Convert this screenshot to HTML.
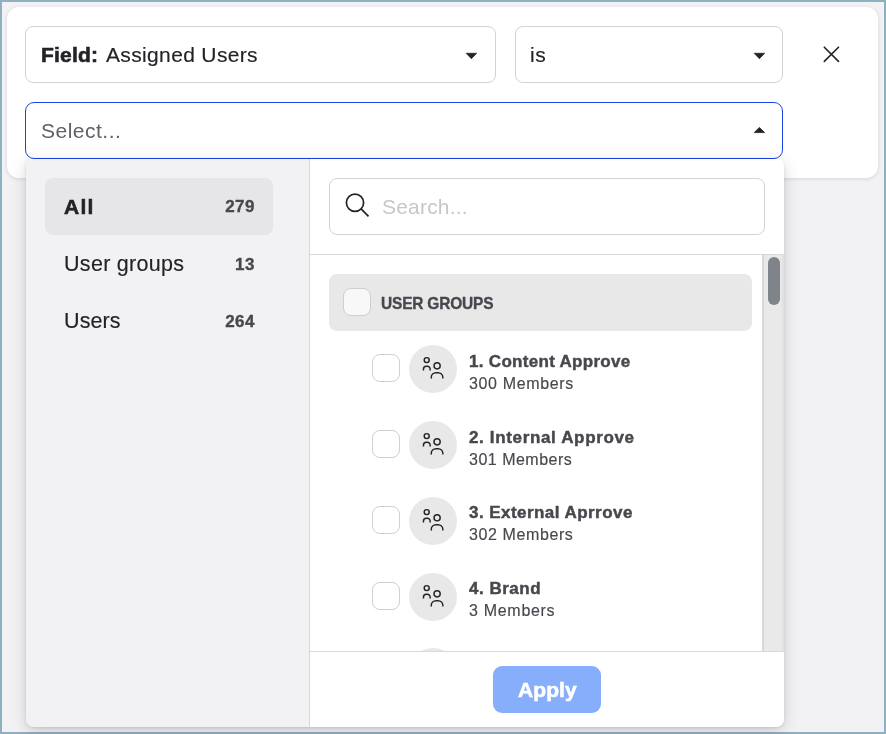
<!DOCTYPE html>
<html><head><meta charset="utf-8">
<style>
*{box-sizing:border-box;margin:0;padding:0}
body{will-change:transform}html,body{width:886px;height:734px;overflow:hidden;background:#8fb0bf;font-family:"Liberation Sans",sans-serif}
.page{position:absolute;left:2px;top:2px;width:882px;height:730px;background:#f2f2f4}
.abs{position:absolute}
.card{left:7px;top:7px;width:871px;height:171px;background:#fff;border-radius:12px;box-shadow:0 1px 4px rgba(0,0,0,.12)}
.box{border:1px solid #d3d3d6;border-radius:8px;background:#fff}
.txt{white-space:nowrap;line-height:1}
.b1{-webkit-text-stroke:.6px currentColor}
.b2{-webkit-text-stroke:.35px currentColor}
.r1{-webkit-text-stroke:.15px currentColor}
.panel{left:26px;top:159px;width:758px;height:568px;background:#fff;border-radius:0 6px 8px 8px;box-shadow:0 4px 16px rgba(0,0,0,.16),0 1px 3px rgba(0,0,0,.1);overflow:hidden}
.left{left:0;top:0;width:284px;height:568px;background:#f2f2f4;border-right:1px solid #d9d9dc}
.cb{width:28px;height:28px;border:1px solid #cfcfd2;border-radius:8px;background:#fff}
.av{width:48px;height:48px;border-radius:50%;background:#e8e8e9}
.ttl{-webkit-text-stroke:.45px currentColor;font-weight:bold;font-size:17px;color:#47484d}
.sub{-webkit-text-stroke:.15px currentColor;font-size:16px;color:#47484d;letter-spacing:.5px}
.num{-webkit-text-stroke:.35px currentColor;font-size:17px;font-weight:bold;color:#47484d;letter-spacing:.5px;width:60px;text-align:right}
</style></head><body>
<div class="page"></div>
<div class="abs card"></div>
<!-- Field box -->
<div class="abs box" style="left:25px;top:26px;width:471px;height:57px"></div>
<div class="abs txt b1" style="left:41px;top:44px;font-size:21px;font-weight:bold;color:#222327;letter-spacing:.2px">Field:</div>
<div class="abs txt r1" style="left:106px;top:44px;font-size:21px;color:#222327;letter-spacing:.35px">Assigned Users</div>
<svg class="abs" style="left:460px;top:48px" width="24" height="16" viewBox="0 0 24 16"><path d="M6.2 5.3 H16.6 L11.4 10.7 Z" fill="#222327" stroke="#222327" stroke-width=".8" stroke-linejoin="round"/></svg>
<!-- is box -->
<div class="abs box" style="left:515px;top:26px;width:268px;height:57px"></div>
<div class="abs txt r1" style="left:530px;top:44px;font-size:21px;color:#222327;letter-spacing:.5px">is</div>
<svg class="abs" style="left:748px;top:48px" width="24" height="16" viewBox="0 0 24 16"><path d="M6.2 5.3 H16.6 L11.4 10.7 Z" fill="#222327" stroke="#222327" stroke-width=".8" stroke-linejoin="round"/></svg>
<!-- X -->
<svg class="abs" style="left:816px;top:40px" width="30" height="28" viewBox="0 0 30 28"><path d="M8.3 7.2 L22.5 21.4 M22.5 7.2 L8.3 21.4" stroke="#222327" stroke-width="1.6" fill="none" stroke-linecap="round"/></svg>
<!-- Select box -->
<div class="abs box" style="left:25px;top:102px;width:758px;height:57px;border-color:#1a44e8;border-radius:9px"></div>
<div class="abs txt" style="left:41px;top:120px;font-size:21px;color:#5f6068;letter-spacing:.5px">Select...</div>
<svg class="abs" style="left:748px;top:122px" width="24" height="16" viewBox="0 0 24 16"><path d="M6.2 10.6 H16.6 L11.4 5.4 Z" fill="#222327" stroke="#222327" stroke-width=".8" stroke-linejoin="round"/></svg>

<!-- Panel -->
<div class="abs panel">
  <div class="abs left"></div>
  <div class="abs" style="left:19px;top:19px;width:228px;height:57px;background:#e6e6e8;border-radius:8px"></div>
  <div class="abs txt b1" style="left:38px;top:37px;font-size:21px;font-weight:bold;color:#222327;letter-spacing:1.3px">All</div>
  <div class="abs txt num" style="left:169px;top:39px">279</div>
  <div class="abs txt r1" style="left:38px;top:94.5px;font-size:21.5px;color:#222327;letter-spacing:.3px">User groups</div>
  <div class="abs txt num" style="left:169px;top:97px">13</div>
  <div class="abs txt r1" style="left:38px;top:151.5px;font-size:21.5px;color:#222327;letter-spacing:.1px">Users</div>
  <div class="abs txt num" style="left:169px;top:154px">264</div>

  <!-- search -->
  <div class="abs box" style="left:303px;top:19px;width:436px;height:57px"></div>
  <svg class="abs" style="left:314px;top:29px" width="30" height="30" viewBox="0 0 30 30"><circle cx="15" cy="14.8" r="8.6" stroke="#222327" stroke-width="1.7" fill="none"/><path d="M21.1 20.9 L28.5 28.3" stroke="#222327" stroke-width="1.7"/></svg>
  <div class="abs txt" style="left:356px;top:37px;font-size:21px;color:#c7c7ca;letter-spacing:.2px">Search...</div>
  <div class="abs" style="left:284px;top:95px;width:474px;height:1px;background:#d9d9dc"></div>

  <!-- scrollbar -->
  <div class="abs" style="left:736px;top:96px;width:22px;height:396px;background:#e9e9ea;border-left:2px solid #d8d8da;border-right:2px solid #e1e1e3"></div>
  <div class="abs" style="left:742px;top:98px;width:12px;height:48px;background:#7f838a;border-radius:6px"></div>

  <!-- header -->
  <div class="abs" style="left:303px;top:115px;width:423px;height:57px;background:#e8e8e9;border-radius:8px"></div>
  <div class="abs cb" style="left:317px;top:129px;background:#f8f8f8"></div>
  <div class="abs txt b2" style="left:355px;top:135.5px;font-size:17px;font-weight:bold;color:#47484d;letter-spacing:-.2px;transform:scaleX(.91);transform-origin:0 0">USER GROUPS</div>

  <!-- items -->
  <svg width="0" height="0" style="position:absolute"><defs><g id="ppl" fill="none" stroke="#222327" stroke-width="1.45"><circle cx="17.7" cy="15.1" r="2.5"/><path d="M14.45 25.5 V24.15 A3 3 0 0 1 17.45 21.15 H18.15 A3 3 0 0 1 21.15 24.15 V25.5"/><circle cx="28.1" cy="20.8" r="3.1"/><path d="M22.25 33.6 V32.45 A4.8 4.8 0 0 1 27.05 27.65 H29.05 A4.8 4.8 0 0 1 33.85 32.45 V33.6"/></g></defs></svg>
  <div class="abs cb" style="left:346px;top:195px"></div>
  <div class="abs av" style="left:383px;top:186px"><svg width="48" height="48"><use href="#ppl"/></svg></div>
  <div class="abs txt ttl" style="left:443px;top:194px;letter-spacing:.3px">1. Content Approve</div>
  <div class="abs txt sub" style="left:443px;top:217px;letter-spacing:.65px">300 Members</div>

  <div class="abs cb" style="left:346px;top:271px"></div>
  <div class="abs av" style="left:383px;top:262px"><svg width="48" height="48"><use href="#ppl"/></svg></div>
  <div class="abs txt ttl" style="left:443px;top:270px;letter-spacing:.65px">2. Internal Approve</div>
  <div class="abs txt sub" style="left:443px;top:293px">301 Members</div>

  <div class="abs cb" style="left:346px;top:347px"></div>
  <div class="abs av" style="left:383px;top:338px"><svg width="48" height="48"><use href="#ppl"/></svg></div>
  <div class="abs txt ttl" style="left:443px;top:345px;letter-spacing:.45px">3. External Aprrove</div>
  <div class="abs txt sub" style="left:443px;top:368px;letter-spacing:.6px">302 Members</div>

  <div class="abs cb" style="left:346px;top:423px"></div>
  <div class="abs av" style="left:383px;top:414px"><svg width="48" height="48"><use href="#ppl"/></svg></div>
  <div class="abs txt ttl" style="left:443px;top:421px;letter-spacing:.5px">4. Brand</div>
  <div class="abs txt sub" style="left:443px;top:444px;letter-spacing:.7px">3 Members</div>

  <div class="abs av" style="left:383px;top:489px"></div>

  <!-- footer -->
  <div class="abs" style="left:284px;top:492px;width:474px;height:76px;background:#fff;border-top:1px solid #d9d9dc"></div>
  <div class="abs" style="left:467px;top:507px;width:108px;height:47px;background:#87aefa;border-radius:9px"></div>
  <div class="abs txt b1" style="left:492px;top:520px;font-size:21px;font-weight:bold;color:#fff;letter-spacing:.1px">Apply</div>
</div>
</body></html>
